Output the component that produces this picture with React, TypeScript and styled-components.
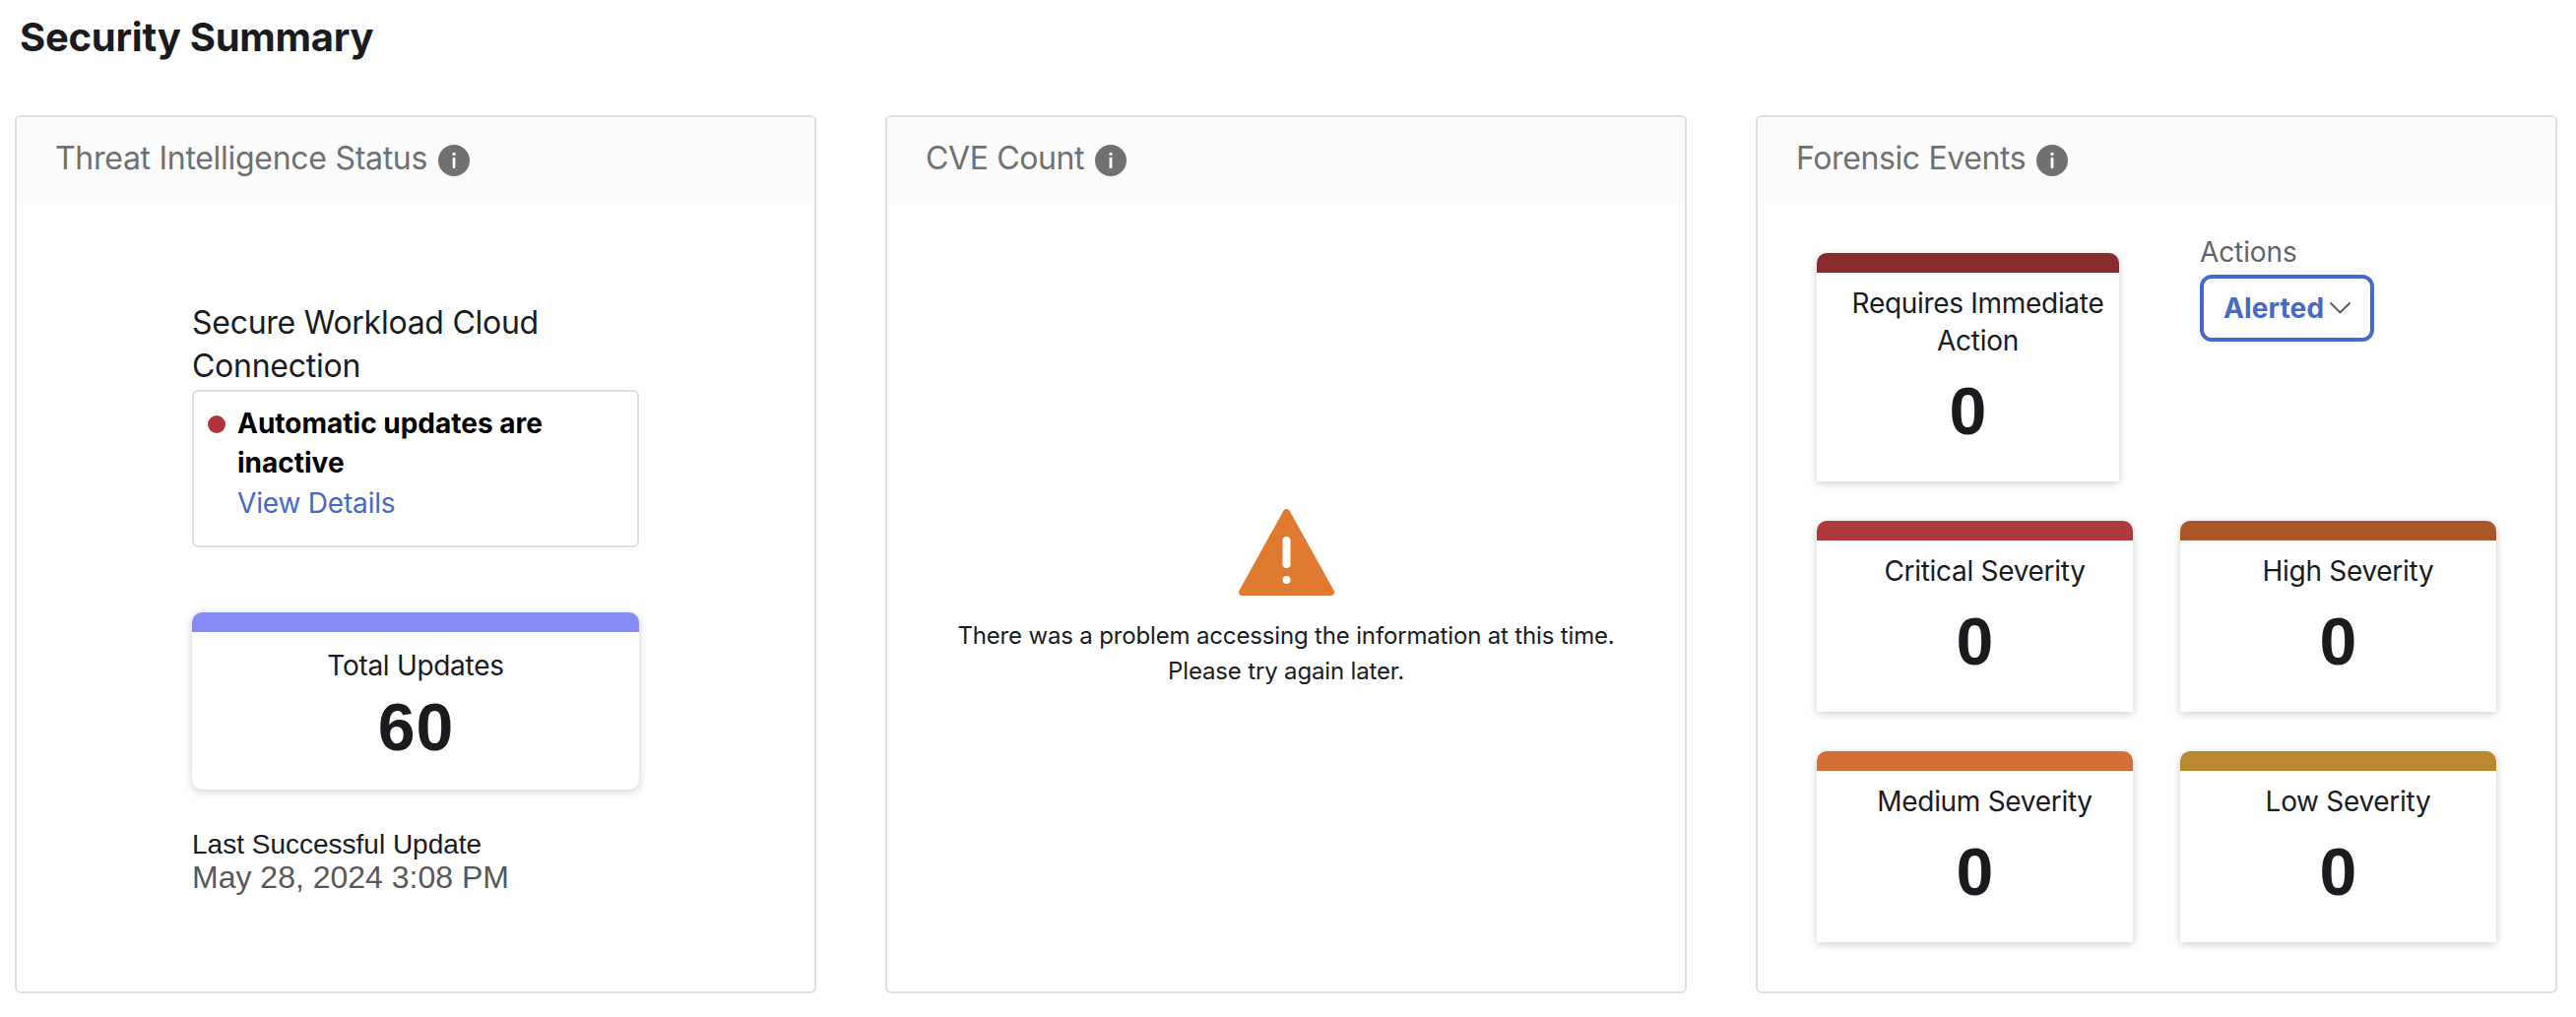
import React from 'react'
import styled, { createGlobalStyle } from 'styled-components'

const GlobalStyle = createGlobalStyle`
  * {
    box-sizing: border-box;
  }

  body {
    margin: 0;
    background-color: #fff;
    color: #191b1f;
    font-family: Inter, 'Liberation Sans', sans-serif;
    font-size: 28px;
  }
`

const Page = styled.main`
  padding: 18px 19px 0 15px;
`

const PageTitle = styled.h1`
  margin: 0 0 59px 5px;
  font-size: 40px;
  line-height: 40px;
  font-weight: 700;
  letter-spacing: -0.25px;
`

const Panels = styled.div`
  display: grid;
  grid-template-columns: 814px 814px 814px;
  column-gap: 70px;
`

const Panel = styled.section`
  display: flex;
  flex-direction: column;
  height: 892px;
  border: 2px solid #dfdfdf;
  border-radius: 6px;
  overflow: hidden;
`

const PanelHeader = styled.header`
  display: flex;
  align-items: center;
  gap: 11px;
  height: 88px;
  padding: 0 0 4px 39px;
  background-color: #fbfbfb;
`

const PanelTitle = styled.h2<{ $spacing?: number }>`
  margin: 0;
  color: #707070;
  font-size: 32px;
  line-height: 40px;
  font-weight: 400;
  letter-spacing: ${({ $spacing = -0.38 }) => $spacing}px;
`

const StyledInfo = styled.svg`
  width: 32px;
  height: 32px;
  margin-top: 4px;
`

const ThreatBody = styled.div`
  width: 454px;
  margin: 99px 0 0 178px;
`

const ConnectionLabel = styled.div`
  font-size: 32px;
  line-height: 44px;
  letter-spacing: -0.26px;
`

const StatusBox = styled.div`
  display: flex;
  gap: 12px;
  height: 160px;
  margin-top: 2px;
  padding: 12px 14px;
  border: 2px solid #dfdfdf;
  border-radius: 6px;
  line-height: 40px;
`

const StatusDot = styled.span`
  flex: none;
  width: 18px;
  height: 18px;
  margin-top: 12px;
  border-radius: 50%;
  background-color: #b03338;
`

const StatusText = styled.div`
  color: #000;
  font-weight: 700;
`

const Link = styled.a`
  display: block;
  padding-top: 1px;
  color: #4669c7;
  letter-spacing: -0.18px;
  text-decoration: none;
`

const Tile = styled.div<{ $color: string }>`
  display: flex;
  flex-direction: column;
  align-items: center;
  border-top: 20px solid ${({ $color }) => $color};
  border-radius: 10px 10px 0 0;
  box-shadow: 0 2px 8px rgba(0, 0, 0, 0.2);
  text-align: center;
`

const UpdatesTile = styled(Tile)`
  height: 180px;
  margin-top: 66px;
  padding-top: 15px;
  border-radius: 10px;
`

const EventTile = styled(Tile)`
  padding-top: 12px;
`

const TileLabel = styled.div`
  line-height: 38px;
  letter-spacing: -0.3px;
`

const EventLabel = styled(TileLabel)`
  width: 100%;
  padding-left: 20px;
`

const TileValue = styled.div`
  margin-top: 11px;
  padding-left: 1px;
  font-family: 'Liberation Sans', sans-serif;
  font-size: 68px;
  line-height: 64px;
  font-weight: 700;
  letter-spacing: 1px;
`

const EventValue = styled(TileValue)`
  margin-top: 20px;
`

const LastUpdate = styled.div`
  margin-top: 40px;
  font-family: 'Liberation Sans', sans-serif;
  line-height: 32px;
`

const LastUpdateDate = styled.div`
  color: #58585b;
  font-size: 32px;
  line-height: 35px;
`

const ErrorBody = styled.div`
  flex: 1;
  display: flex;
  flex-direction: column;
  align-items: center;
  padding-top: 310px;
`

const StyledWarning = styled.svg`
  width: 97px;
  height: 88px;
`

const ErrorMessage = styled.p`
  margin: 23px 0 0;
  font-size: 24px;
  line-height: 36px;
  letter-spacing: -0.16px;
  text-align: center;
`

const EventsBody = styled.div`
  display: grid;
  grid-template-columns: 321px 321px;
  grid-template-rows: 232px 194px 194px;
  gap: 40px 48px;
  padding: 50px 0 0 60px;
`

const ImmediateCell = styled.div`
  display: grid;
  padding-right: 14px;
`

const Actions = styled.div`
  margin: -21px 0 0 20px;
`

const ActionsLabel = styled.div`
  color: #626469;
  line-height: 40px;
  letter-spacing: -0.1px;
`

const ActionsButton = styled.button`
  display: flex;
  align-items: center;
  gap: 6px;
  width: 177px;
  height: 68px;
  margin-top: 3px;
  padding: 0 0 0 20px;
  border: 4px solid #4669c7;
  border-radius: 12px;
  background-color: #fff;
  color: #4669c7;
  font: 700 28px Inter, sans-serif;
  letter-spacing: 0.1px;
`

const InfoIcon: React.FC = () => (
  <StyledInfo viewBox="0 0 32 32">
    <circle cx="16" cy="16" r="16" fill="#707070" />
    <circle cx="16" cy="9.4" r="1.7" fill="#fff" />
    <path d="M16 14.2v8.6" stroke="#fff" strokeWidth="2.8" strokeLinecap="round" />
  </StyledInfo>
)

const WarningIcon: React.FC = () => (
  <StyledWarning viewBox="0 0 97 88">
    <path
      d="M48.5 3.5 93.5 84.5H3.5Z"
      fill="#e07a30"
      stroke="#e07a30"
      strokeWidth="7"
      strokeLinejoin="round"
    />
    <path d="M48.5 32v24" stroke="#fff" strokeWidth="8" strokeLinecap="round" />
    <circle cx="48.5" cy="72" r="4" fill="#fff" />
  </StyledWarning>
)

const ChevronIcon: React.FC = () => (
  <svg width="21" height="12" viewBox="0 0 21 12" fill="none">
    <path d="M1 1l9.5 9.5L20 1" stroke="#58585b" strokeWidth="1.8" strokeLinecap="round" />
  </svg>
)

const severities = [
  { label: 'Critical Severity', count: 0, color: '#af3a3c' },
  { label: 'High Severity', count: 0, color: '#a95628' },
  { label: 'Medium Severity', count: 0, color: '#d46e37' },
  { label: 'Low Severity', count: 0, color: '#b9882f' },
]

export const App: React.FC = () => (
  <Page>
    <GlobalStyle />
    <PageTitle>Security Summary</PageTitle>
    <Panels>
      <Panel>
        <PanelHeader>
          <PanelTitle $spacing={-0.29}>Threat Intelligence Status</PanelTitle>
          <InfoIcon />
        </PanelHeader>
        <ThreatBody>
          <ConnectionLabel>Secure Workload Cloud Connection</ConnectionLabel>
          <StatusBox>
            <StatusDot />
            <div>
              <StatusText>
                Automatic updates are
                <br />
                inactive
              </StatusText>
              <Link>View Details</Link>
            </div>
          </StatusBox>
          <UpdatesTile $color="#878bf7">
            <TileLabel>Total Updates</TileLabel>
            <TileValue>60</TileValue>
          </UpdatesTile>
          <LastUpdate>
            Last Successful Update
            <LastUpdateDate>May 28, 2024 3:08 PM</LastUpdateDate>
          </LastUpdate>
        </ThreatBody>
      </Panel>

      <Panel>
        <PanelHeader>
          <PanelTitle>CVE Count</PanelTitle>
          <InfoIcon />
        </PanelHeader>
        <ErrorBody>
          <WarningIcon />
          <ErrorMessage>
            There was a problem accessing the information at this time.
            <br />
            Please try again later.
          </ErrorMessage>
        </ErrorBody>
      </Panel>

      <Panel>
        <PanelHeader>
          <PanelTitle>Forensic Events</PanelTitle>
          <InfoIcon />
        </PanelHeader>
        <EventsBody>
          <ImmediateCell>
            <EventTile $color="#882b2c">
              <EventLabel>
                Requires Immediate
                <br />
                Action
              </EventLabel>
              <EventValue>0</EventValue>
            </EventTile>
          </ImmediateCell>
          <Actions>
            <ActionsLabel>Actions</ActionsLabel>
            <ActionsButton>
              Alerted
              <ChevronIcon />
            </ActionsButton>
          </Actions>
          {severities.map(({ label, count, color }) => (
            <EventTile key={label} $color={color}>
              <EventLabel>{label}</EventLabel>
              <EventValue>{count}</EventValue>
            </EventTile>
          ))}
        </EventsBody>
      </Panel>
    </Panels>
  </Page>
)

export default App
